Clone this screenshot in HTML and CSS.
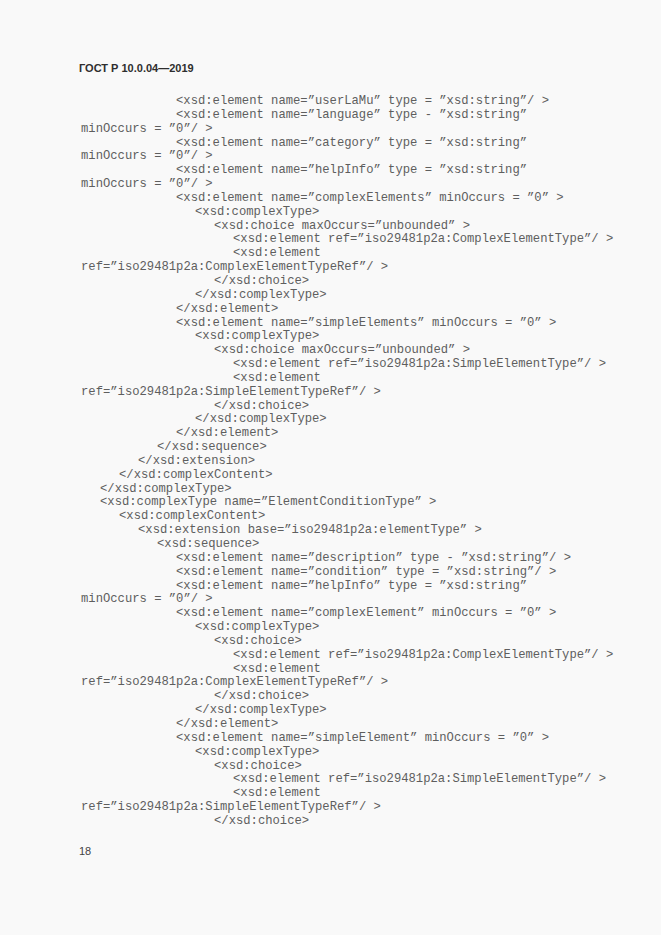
FILE: index.html
```html
<!DOCTYPE html>
<html lang="ru">
<head>
<meta charset="utf-8">
<title>ГОСТ Р 10.0.04—2019</title>
<link rel="stylesheet" href="styles.css">
</head>
<body>
<div class="page">
  <div class="doc-title">ГОСТ Р 10.0.04—2019</div>
  <div class="code">
    <div class="ln l5">&lt;xsd:element name=”userLaMu” type = ”xsd:string”/ &gt;</div>
    <div class="ln l5">&lt;xsd:element name=”language” type - ”xsd:string”</div>
    <div class="ln l0">minOccurs = ”0”/ &gt;</div>
    <div class="ln l5">&lt;xsd:element name=”category” type = ”xsd:string”</div>
    <div class="ln l0">minOccurs = ”0”/ &gt;</div>
    <div class="ln l5">&lt;xsd:element name=”helpInfo” type = ”xsd:string”</div>
    <div class="ln l0">minOccurs = ”0”/ &gt;</div>
    <div class="ln l5">&lt;xsd:element name=”complexElements” minOccurs = ”0” &gt;</div>
    <div class="ln l6">&lt;xsd:complexType&gt;</div>
    <div class="ln l7">&lt;xsd:choice maxOccurs=”unbounded” &gt;</div>
    <div class="ln l8">&lt;xsd:element ref=”iso29481p2a:ComplexElementType”/ &gt;</div>
    <div class="ln l8">&lt;xsd:element</div>
    <div class="ln l0">ref=”iso29481p2a:ComplexElementTypeRef”/ &gt;</div>
    <div class="ln l7">&lt;/xsd:choice&gt;</div>
    <div class="ln l6">&lt;/xsd:complexType&gt;</div>
    <div class="ln l5">&lt;/xsd:element&gt;</div>
    <div class="ln l5">&lt;xsd:element name=”simpleElements” minOccurs = ”0” &gt;</div>
    <div class="ln l6">&lt;xsd:complexType&gt;</div>
    <div class="ln l7">&lt;xsd:choice maxOccurs=”unbounded” &gt;</div>
    <div class="ln l8">&lt;xsd:element ref=”iso29481p2a:SimpleElementType”/ &gt;</div>
    <div class="ln l8">&lt;xsd:element</div>
    <div class="ln l0">ref=”iso29481p2a:SimpleElementTypeRef”/ &gt;</div>
    <div class="ln l7">&lt;/xsd:choice&gt;</div>
    <div class="ln l6">&lt;/xsd:complexType&gt;</div>
    <div class="ln l5">&lt;/xsd:element&gt;</div>
    <div class="ln l4">&lt;/xsd:sequence&gt;</div>
    <div class="ln l3">&lt;/xsd:extension&gt;</div>
    <div class="ln l2">&lt;/xsd:complexContent&gt;</div>
    <div class="ln l1">&lt;/xsd:complexType&gt;</div>
    <div class="ln l1">&lt;xsd:complexType name=”ElementConditionType” &gt;</div>
    <div class="ln l2">&lt;xsd:complexContent&gt;</div>
    <div class="ln l3">&lt;xsd:extension base=”iso29481p2a:elementType” &gt;</div>
    <div class="ln l4">&lt;xsd:sequence&gt;</div>
    <div class="ln l5">&lt;xsd:element name=”description” type - ”xsd:string”/ &gt;</div>
    <div class="ln l5">&lt;xsd:element name=”condition” type = ”xsd:string”/ &gt;</div>
    <div class="ln l5">&lt;xsd:element name=”helpInfo” type = ”xsd:string”</div>
    <div class="ln l0">minOccurs = ”0”/ &gt;</div>
    <div class="ln l5">&lt;xsd:element name=”complexElement” minOccurs = ”0” &gt;</div>
    <div class="ln l6">&lt;xsd:complexType&gt;</div>
    <div class="ln l7">&lt;xsd:choice&gt;</div>
    <div class="ln l8">&lt;xsd:element ref=”iso29481p2a:ComplexElementType”/ &gt;</div>
    <div class="ln l8">&lt;xsd:element</div>
    <div class="ln l0">ref=”iso29481p2a:ComplexElementTypeRef”/ &gt;</div>
    <div class="ln l7">&lt;/xsd:choice&gt;</div>
    <div class="ln l6">&lt;/xsd:complexType&gt;</div>
    <div class="ln l5">&lt;/xsd:element&gt;</div>
    <div class="ln l5">&lt;xsd:element name=”simpleElement” minOccurs = ”0” &gt;</div>
    <div class="ln l6">&lt;xsd:complexType&gt;</div>
    <div class="ln l7">&lt;xsd:choice&gt;</div>
    <div class="ln l8">&lt;xsd:element ref=”iso29481p2a:SimpleElementType”/ &gt;</div>
    <div class="ln l8">&lt;xsd:element</div>
    <div class="ln l0">ref=”iso29481p2a:SimpleElementTypeRef”/ &gt;</div>
    <div class="ln l7">&lt;/xsd:choice&gt;</div>
  </div>
  <div class="page-num">18</div>
</div>
</body>
</html>
```

FILE: styles.css
```css
html, body {
  margin: 0;
  padding: 0;
  background: #f9f9f9;
}

.page {
  width: 661px;
  height: 935px;
  box-sizing: border-box;
  padding: 61px 0 0 79px;
  overflow: hidden;
}

.doc-title {
  font-family: "Liberation Sans", Arial, sans-serif;
  font-weight: bold;
  font-size: 11px;
  line-height: 14px;
  color: #2e2e2e;
}

.code {
  margin-top: 20px;
  margin-left: 2px;
  font-family: "Liberation Mono", "Courier New", monospace;
  font-size: 12.2px;
  line-height: 13.85px;
  color: #5e5e5e;
}

.ln {
  height: 13.85px;
  white-space: pre;
}
.l0 { padding-left: 0; }
.l1 { padding-left: 19px; }
.l2 { padding-left: 38px; }
.l3 { padding-left: 57px; }
.l4 { padding-left: 76px; }
.l5 { padding-left: 95px; }
.l6 { padding-left: 114px; }
.l7 { padding-left: 133px; }
.l8 { padding-left: 152px; }

.page-num {
  margin-top: 15px;
  font-family: "Liberation Sans", Arial, sans-serif;
  font-size: 11px;
  line-height: 14px;
  color: #444;
}
```
